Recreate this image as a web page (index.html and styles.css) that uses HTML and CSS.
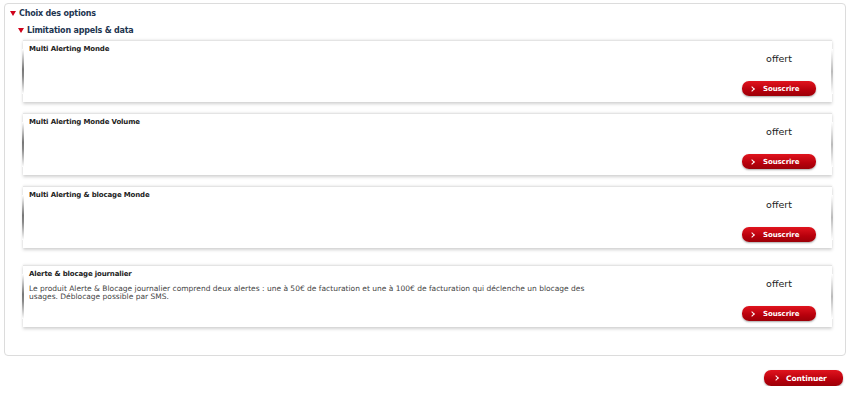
FILE: index.html
```html
<!DOCTYPE html>
<html lang="fr">

<head>
    <meta charset="UTF-8">
    <meta name="viewport" content="width=device-width, initial-scale=1.0">
    <title>Choix des options</title>
    <link rel="stylesheet" href="styles.css">
</head>

<body>
    <div class="page">
        <div class="panel">
            <h2 class="toggle">Choix des options</h2>
            <div class="group">
                <h3 class="toggle">Limitation appels &amp; data</h3>

                <div class="offer">
                    <div class="offer-info">
                        <h4>Multi Alerting Monde</h4>
                    </div>
                    <div class="offer-side">
                        <span class="price">offert</span>
                        <a class="btn" href="#"><i class="chev"></i>Souscrire</a>
                    </div>
                </div>

                <div class="offer">
                    <div class="offer-info">
                        <h4>Multi Alerting Monde Volume</h4>
                    </div>
                    <div class="offer-side">
                        <span class="price">offert</span>
                        <a class="btn" href="#"><i class="chev"></i>Souscrire</a>
                    </div>
                </div>

                <div class="offer">
                    <div class="offer-info">
                        <h4 class="light">Multi Alerting &amp; blocage Monde</h4>
                    </div>
                    <div class="offer-side">
                        <span class="price">offert</span>
                        <a class="btn" href="#"><i class="chev"></i>Souscrire</a>
                    </div>
                </div>

                <div class="offer offer-last">
                    <div class="offer-info">
                        <h4>Alerte &amp; blocage journalier</h4>
                        <p>Le produit Alerte &amp; Blocage journalier comprend deux alertes : une à 50€ de facturation et une à 100€ de facturation qui déclenche un blocage des usages. Déblocage possible par SMS.</p>
                    </div>
                    <div class="offer-side">
                        <span class="price">offert</span>
                        <a class="btn" href="#"><i class="chev"></i>Souscrire</a>
                    </div>
                </div>
            </div>
        </div>

        <div class="actions">
            <a class="btn btn-big" href="#"><i class="chev"></i>Continuer</a>
        </div>
    </div>
</body>

</html>
```

FILE: styles.css
```css
* {
    margin: 0;
    padding: 0;
    box-sizing: border-box;
}

body {
    background: #fff;
    font-family: "DejaVu Sans", Verdana, sans-serif;
    color: #222;
}

.page {
    padding: 3px 4px 0 4px;
    width: 850px;
}

.panel {
    border: 1px solid #dcdcdc;
    border-radius: 4px;
    height: 353px;
    padding: 4px 13px 0 5px;
}

.toggle {
    display: flex;
    align-items: center;
    font-size: 8px;
    font-weight: bold;
    color: #1d3550;
    letter-spacing: -0.2px;
    height: 10px;
}

.toggle::before {
    content: "";
    border-left: 3.5px solid transparent;
    border-right: 3.5px solid transparent;
    border-top: 5px solid #d0021b;
    margin-right: 3px;
}

.group {
    padding-left: 8px;
    margin-top: 7px;
}

.group h3 {
    margin-bottom: 5px;
}

.offer {
    position: relative;
    display: grid;
    grid-template-columns: 1fr 74px;
    height: 62px;
    margin-left: 5px;
    margin-bottom: 11px;
    padding: 3px 16px 0 6px;
    background: #fff;
    border-top: 1px solid #e4e4e4;
    box-shadow: 0 2px 3px rgba(0, 0, 0, 0.18), 0 -1px 2px rgba(0, 0, 0, 0.06);
}

.offer::before,
.offer::after {
    content: "";
    position: absolute;
    top: 8px;
    bottom: 8px;
    width: 2px;
    background: linear-gradient(#fff, #777 45%, #888 60%, #fff);
}

.offer::before {
    left: -1px;
}

.offer::after {
    right: -1px;
    background: linear-gradient(#fff, #bbb 50%, #fff);
}

.offer-last {
    margin-top: 17px;
}

.offer-info h4 {
    font-size: 7px;
    font-weight: bold;
    color: #222;
    letter-spacing: -0.15px;
    line-height: 10px;
}

.offer-info h4.light {
    font-weight: 600;
}

.offer-info p {
    margin-top: 6px;
    font-size: 7.5px;
    line-height: 8px;
    color: #444;
    letter-spacing: 0;
    max-width: 565px;
}

.offer-side {
    display: flex;
    flex-direction: column;
    align-items: center;
    padding-top: 9px;
}

.price {
    font-size: 9.5px;
    color: #222;
    height: 13px;
    margin-bottom: 15px;
}

.btn {
    display: flex;
    align-items: center;
    width: 74px;
    height: 15px;
    padding-left: 8px;
    border-radius: 7px;
    background: linear-gradient(#e0141e, #b8000c 60%, #9c0008);
    box-shadow: 0 1px 2px rgba(0, 0, 0, 0.35);
    color: #fff;
    font-size: 7px;
    font-weight: bold;
    text-decoration: none;
    letter-spacing: -0.1px;
}

.chev {
    width: 4px;
    height: 4px;
    border-top: 1.5px solid #fff;
    border-right: 1.5px solid #fff;
    transform: rotate(45deg);
    margin-right: 9px;
}

.actions {
    display: flex;
    justify-content: flex-end;
    padding: 14px 3px 0 0;
}

.btn-big {
    width: 79px;
    height: 16px;
    padding-left: 10px;
    font-size: 7.5px;
}

.btn-big .chev {
    margin-right: 8px;
}
```
